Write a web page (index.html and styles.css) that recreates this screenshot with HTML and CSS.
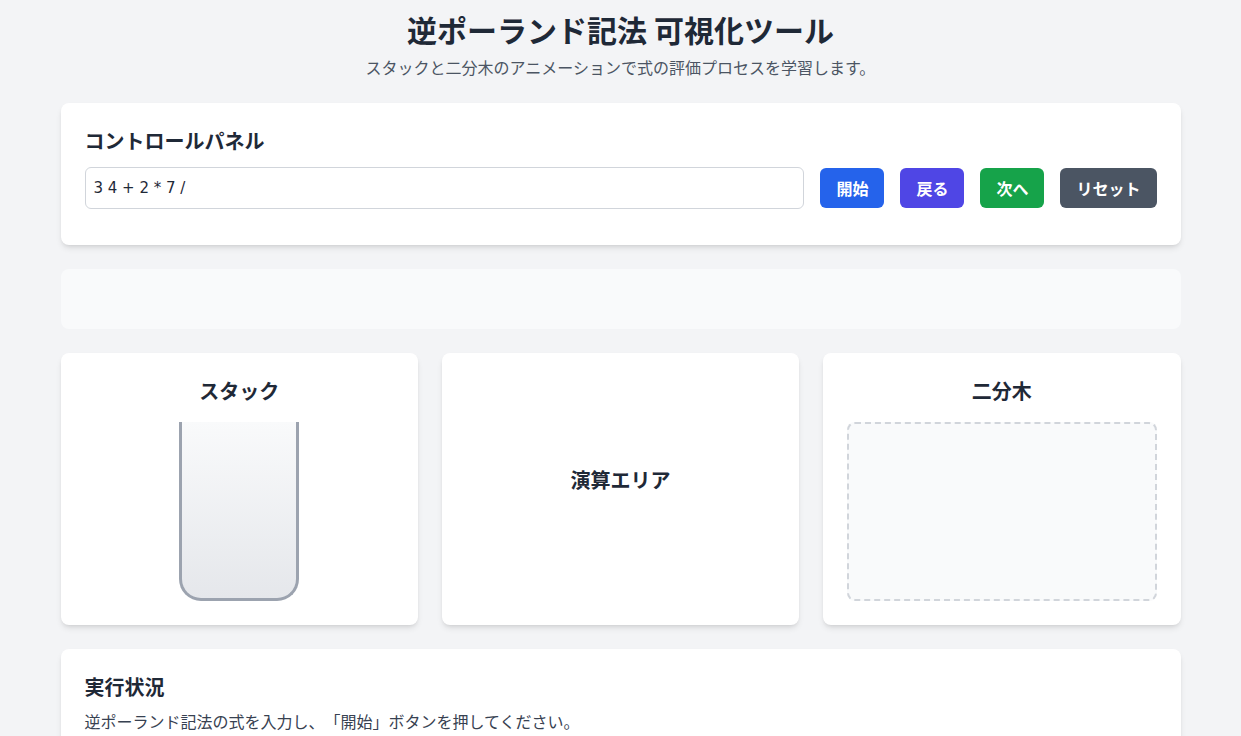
FILE: index.html
```html
<!DOCTYPE html>
<html lang="ja">
<head>
	<meta charset="UTF-8">
	<title>逆ポーランド記法 可視化ツール</title>
	<link rel="stylesheet" href="styles.css">
</head>
<body>
	<div class="container">
		<header class="page-header">
			<h1>逆ポーランド記法 可視化ツール</h1>
			<p>スタックと二分木のアニメーションで式の評価プロセスを学習します。</p>
		</header>

		<section class="card control-panel">
			<h2>コントロールパネル</h2>
			<div class="controls">
				<input id="exprInput" type="text" value="3 4 + 2 * 7 /">
				<button class="btn btn-start">開始</button>
				<button class="btn btn-back">戻る</button>
				<button class="btn btn-next">次へ</button>
				<button class="btn btn-reset">リセット</button>
			</div>
		</section>

		<div class="message-area"></div>

		<div class="panels">
			<section class="card panel">
				<h2>スタック</h2>
				<div class="stack-box"></div>
			</section>
			<section class="card panel panel-calc">
				<h2>演算エリア</h2>
			</section>
			<section class="card panel">
				<h2>二分木</h2>
				<div class="tree-box"></div>
			</section>
		</div>

		<section class="card status">
			<h2>実行状況</h2>
			<p>逆ポーランド記法の式を入力し、「開始」ボタンを押してください。</p>
		</section>
	</div>
</body>
</html>
```

FILE: styles.css
```css
html, body {
	margin: 0;
	padding: 0;
	background: #f3f4f6;
	color: #1f2937;
	font-family: "Noto Sans CJK JP", "Noto Sans", sans-serif;
	text-spacing-trim: space-all;
}

.container {
	max-width: 1120px;
	margin: 0 auto;
	padding: 11px 16px 40px;
}

h1, h2, p {
	margin: 0;
}

.page-header {
	text-align: center;
	margin-bottom: 24px;
}

.page-header h1 {
	font-size: 30px;
	line-height: 36px;
	font-weight: 700;
	margin-bottom: 8px;
}

.page-header p {
	font-size: 16px;
	line-height: 24px;
	color: #4b5563;
}

.card {
	background: #fff;
	border-radius: 8px;
	box-shadow: 0 4px 6px -1px rgba(0, 0, 0, 0.1), 0 2px 4px -2px rgba(0, 0, 0, 0.1);
	padding: 24px;
}

.card h2 {
	font-size: 20px;
	line-height: 28px;
	font-weight: 700;
}

.control-panel {
	padding-bottom: 36px;
	margin-bottom: 24px;
}

.control-panel h2 {
	margin-bottom: 12px;
}

.controls {
	display: flex;
	align-items: center;
	gap: 16px;
}

.controls input {
	flex: 1;
	height: 42px;
	box-sizing: border-box;
	border: 1px solid #d1d5db;
	border-radius: 6px;
	padding: 0 8px;
	font: 15px "DejaVu Sans", sans-serif;
	color: #1f2937;
}

.btn {
	border: none;
	border-radius: 6px;
	height: 40px;
	padding: 0 16px;
	color: #fff;
	font: 700 16px "Noto Sans CJK JP", "Noto Sans", sans-serif;
}

.btn-start { background: #2563eb; }
.btn-back { background: #4f46e5; }
.btn-next { background: #16a34a; }
.btn-reset { background: #4b5563; }

.message-area {
	height: 60px;
	background: #f9fafb;
	border-radius: 8px;
	margin-bottom: 24px;
}

.panels {
	display: grid;
	grid-template-columns: repeat(3, 1fr);
	gap: 24px;
	margin-bottom: 24px;
}

.panel {
	display: flex;
	flex-direction: column;
	align-items: center;
	height: 272px;
	box-sizing: border-box;
}

.panel h2 {
	margin-bottom: 17px;
}

.panel-calc {
	justify-content: center;
}

.panel-calc h2 {
	margin: 0 0 18px;
}

.stack-box {
	width: 120px;
	height: 180px;
	box-sizing: border-box;
	border: 3px solid #9ca3af;
	border-top: none;
	border-radius: 0 0 22px 22px;
	background: linear-gradient(to bottom, #f9fafb, #e5e7eb);
}

.tree-box {
	align-self: stretch;
	height: 180px;
	box-sizing: border-box;
	border: 2px dashed #d1d5db;
	border-radius: 8px;
	background: #f9fafb;
}

.status h2 {
	margin-bottom: 8px;
}

.status p {
	font-size: 16px;
	line-height: 24px;
	color: #374151;
}
```
